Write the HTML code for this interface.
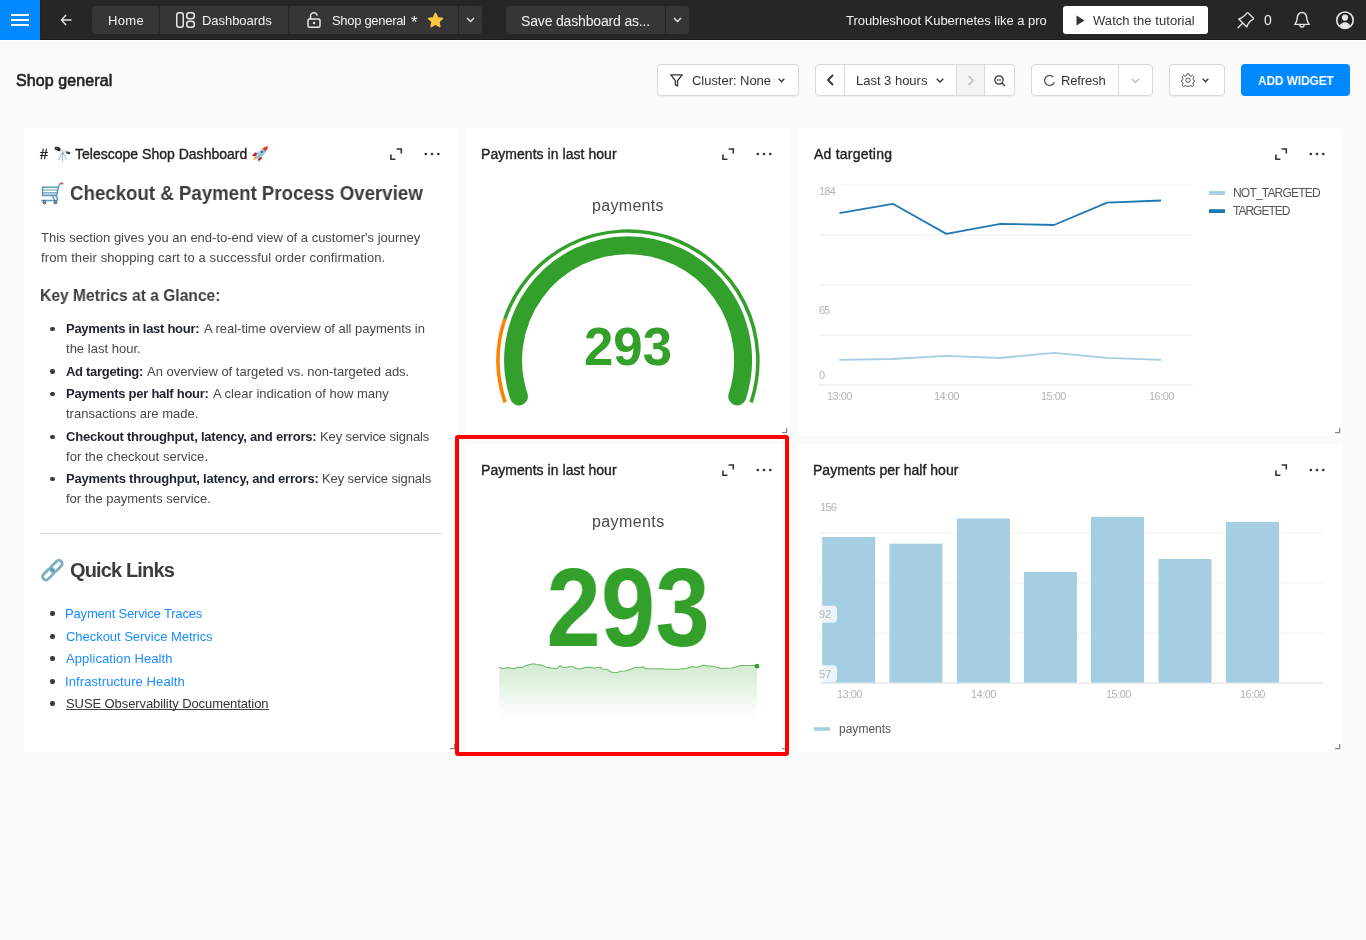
<!DOCTYPE html>
<html><head><meta charset="utf-8">
<style>
*{box-sizing:border-box;margin:0;padding:0}
html,body{width:1366px;height:940px;overflow:hidden;background:#fafafa;font-family:"Liberation Sans",sans-serif;position:relative}
.t{position:absolute;white-space:pre;line-height:0;will-change:transform}
.abs{position:absolute}
.topbar{position:absolute;left:0;top:0;width:1366px;height:40px;background:#262626}
.ham{position:absolute;left:0;top:0;width:40px;height:40px;background:#0088ff}
.ham i{position:absolute;left:11px;width:18px;height:2px;background:#fff}
.nb{position:absolute;top:6px;height:28px;background:#363636}
.btn{position:absolute;top:64px;height:32px;background:#fff;border:1px solid #d9d9d9;border-radius:4px;box-shadow:0 1px 1px rgba(0,0,0,0.04)}
.panel{position:absolute;background:#fff;border-radius:4px}
.grid{position:absolute;height:1px;background:#f0f0f0}
svg{position:absolute;overflow:visible}
</style></head><body>
<div class="topbar"></div>
<div class="abs" style="left:40px;top:39px;width:1326px;height:1px;background:#1b1b1b"></div>
<div class="abs" style="left:40px;top:0;width:1px;height:40px;background:#2b2119"></div>
<div class="abs" style="left:0;top:40px;width:1366px;height:1px;background:#fff"></div>
<div class="ham"><i style="top:13.8px"></i><i style="top:19px"></i><i style="top:24.2px"></i></div>
<!-- back arrow -->
<svg style="left:60px;top:14px" width="12" height="12" viewBox="0 0 12 12"><path d="M6 1 L1.5 6 L6 11 M1.5 6 H11.5" fill="none" stroke="#e6e6e6" stroke-width="1.4"/></svg>
<!-- breadcrumbs -->
<div class="nb" style="left:92px;width:67px;border-radius:4px 0 0 4px"></div>
<div class="nb" style="left:160px;width:128px"></div>
<div class="nb" style="left:289px;width:169px"></div>
<div class="nb" style="left:459px;width:23px;border-radius:0 4px 4px 0"></div>
<!-- dashboards icon -->
<svg style="left:176px;top:12px" width="19" height="16" viewBox="0 0 19 16"><rect x="0.75" y="0.75" width="6.5" height="14.5" rx="2.5" fill="none" stroke="#e6e6e6" stroke-width="1.5"/><rect x="10.75" y="0.75" width="7.5" height="6" rx="2.5" fill="none" stroke="#e6e6e6" stroke-width="1.5"/><rect x="10.75" y="9.25" width="7.5" height="6" rx="2.5" fill="none" stroke="#e6e6e6" stroke-width="1.5"/></svg>
<!-- lock icon -->
<svg style="left:307px;top:12px" width="14" height="16" viewBox="0 0 14 16"><rect x="1" y="7" width="12" height="8.2" rx="1.5" fill="none" stroke="#e6e6e6" stroke-width="1.5"/><path d="M3.5 7 V4.5 A3.3 3.3 0 0 1 10.2 3.6" fill="none" stroke="#e6e6e6" stroke-width="1.5"/><circle cx="7" cy="11" r="1.2" fill="#e6e6e6"/></svg>
<!-- star -->
<svg style="left:427px;top:12px" width="17" height="16" viewBox="0 0 24 23"><path d="M12 2 L15 8.4 L22 9.2 L16.8 13.9 L18.3 20.8 L12 17.2 L5.7 20.8 L7.2 13.9 L2 9.2 L9 8.4 Z" fill="#fbc53d" stroke="#fbc53d" stroke-width="2.2" stroke-linejoin="round"/></svg>
<svg style="left:466px;top:17px" width="9" height="6" viewBox="0 0 9 6"><path d="M1 1 L4.5 4.5 L8 1" fill="none" stroke="#e6e6e6" stroke-width="1.4"/></svg>
<!-- save dashboard -->
<div class="nb" style="left:506px;width:159px;border-radius:4px 0 0 4px"></div>
<div class="nb" style="left:666px;width:23px;border-radius:0 4px 4px 0"></div>
<svg style="left:673px;top:17px" width="9" height="6" viewBox="0 0 9 6"><path d="M1 1 L4.5 4.5 L8 1" fill="none" stroke="#e6e6e6" stroke-width="1.4"/></svg>
<!-- watch tutorial -->
<div class="abs" style="left:1063px;top:6px;width:145px;height:28px;background:#fff;border-radius:3px"></div>
<svg style="left:1076px;top:15px" width="9" height="11" viewBox="0 0 9 11"><path d="M0.5 0.5 L8.5 5.5 L0.5 10.5 Z" fill="#333"/></svg>
<!-- pin -->
<svg style="left:0;top:0" width="1366" height="40" viewBox="0 0 1366 40">
<path d="M1247 12.9 Q1247.6 12.4 1248.2 12.9 L1253.3 18 Q1253.8 18.6 1253.2 19.2 L1250.4 21 L1247.8 24.4 L1246.8 26.9 L1238.8 19 L1241.4 18 L1244.9 15.2 Z M1242.3 23.6 L1238.1 27.8" fill="none" stroke="#e6e6e6" stroke-width="1.35" stroke-linejoin="round" stroke-linecap="round"/>
<path d="M1302 12.5 C1298.4 12.5 1297.3 15.8 1297.1 19 C1296.9 22 1295.6 23.4 1294.8 24.4 H1309.2 C1308.4 23.4 1307.1 22 1306.9 19 C1306.7 15.8 1305.6 12.5 1302 12.5 Z" fill="none" stroke="#e6e6e6" stroke-width="1.35" stroke-linejoin="round"/>
<path d="M1299.9 24.9 A2.1 2.1 0 0 0 1304.1 24.9" fill="none" stroke="#e6e6e6" stroke-width="1.35"/>
<circle cx="1345" cy="20.2" r="8.2" fill="none" stroke="#e6e6e6" stroke-width="1.6"/>
<circle cx="1345" cy="17.6" r="3.1" fill="#e6e6e6"/>
<path d="M1339.3 26.2 C1340.6 23.4 1342.8 22.2 1345 22.2 C1347.2 22.2 1349.4 23.4 1350.7 26.2 A7.6 7.6 0 0 1 1339.3 26.2 Z" fill="#e6e6e6"/>
</svg>

<!-- toolbar -->
<div class="btn" style="left:657px;width:142px"></div>
<svg style="left:670px;top:74px" width="13" height="13" viewBox="0 0 13 13"><path d="M0.8 0.8 H12.2 L7.6 6.6 V12 L5.4 11 V6.6 Z" fill="none" stroke="#333" stroke-width="1.3" stroke-linejoin="round"/></svg>
<svg style="left:778px;top:78px" width="7" height="5" viewBox="0 0 7 5"><path d="M0.7 0.7 L3.5 3.8 L6.3 0.7" fill="none" stroke="#333" stroke-width="1.3"/></svg>

<div class="btn" style="left:815px;width:200px"></div>
<div class="abs" style="left:844px;top:65px;width:1px;height:30px;background:#d9d9d9"></div>
<div class="abs" style="left:956px;top:65px;width:29px;height:30px;background:#f3f3f3;border-left:1px solid #d9d9d9;border-right:1px solid #d9d9d9"></div>
<svg style="left:826px;top:74px" width="9" height="12" viewBox="0 0 9 12"><path d="M7 1 L2 6 L7 11" fill="none" stroke="#333" stroke-width="1.8"/></svg>
<svg style="left:936px;top:78px" width="8" height="5" viewBox="0 0 8 5"><path d="M0.7 0.7 L4 4 L7.3 0.7" fill="none" stroke="#333" stroke-width="1.3"/></svg>
<svg style="left:967px;top:75px" width="8" height="11" viewBox="0 0 8 11"><path d="M1.5 1 L6 5.5 L1.5 10" fill="none" stroke="#bbb" stroke-width="1.5"/></svg>
<svg style="left:994px;top:75px" width="12" height="11" viewBox="0 0 12 11"><circle cx="5" cy="5" r="4.2" fill="none" stroke="#333" stroke-width="1.2"/><path d="M3 5 H7 M8 8 L11 11" fill="none" stroke="#333" stroke-width="1.2"/></svg>

<div class="btn" style="left:1031px;width:122px"></div>
<div class="abs" style="left:1118px;top:65px;width:1px;height:30px;background:#d9d9d9"></div>
<svg style="left:1043px;top:74px" width="13" height="13" viewBox="0 0 13 13"><path d="M10.4 3.2 A5 5 0 1 0 11.3 8.2" fill="none" stroke="#555" stroke-width="1.3"/></svg>
<svg style="left:1131px;top:78px" width="9" height="5" viewBox="0 0 9 5"><path d="M0.7 0.7 L4.5 4.3 L8.3 0.7" fill="none" stroke="#bbb" stroke-width="1.2"/></svg>

<div class="btn" style="left:1169px;width:56px"></div>
<svg style="left:1181px;top:73px" width="14" height="14" viewBox="0 0 14 14"><path d="M6 0.8 H8 L8.4 2.6 L9.9 3.3 L11.5 2.3 L12.9 3.7 L11.9 5.3 L12.5 6.8 L13.2 7 V8.9 L12.4 9.3 L11.8 10.7 L12.8 12.3 L11.4 13.6 L9.8 12.6 L8.3 13.2 L8 13.2 H6 L5.6 13.2 L4.1 12.6 L2.5 13.6 L1.1 12.3 L2.1 10.7 L1.5 9.3 L0.8 8.9 V7 L1.5 6.8 L2.1 5.3 L1.1 3.7 L2.5 2.3 L4.1 3.3 L5.6 2.6 Z" fill="none" stroke="#444" stroke-width="0.95" stroke-linejoin="round"/><circle cx="7" cy="7.2" r="2.2" fill="none" stroke="#444" stroke-width="0.95"/></svg>
<svg style="left:1202px;top:78px" width="7" height="5" viewBox="0 0 7 5"><path d="M0.7 0.7 L3.5 3.8 L6.3 0.7" fill="none" stroke="#333" stroke-width="1.3"/></svg>

<div class="abs" style="left:1241px;top:64px;width:109px;height:32px;background:#0088ff;border-radius:4px"></div>

<!-- panels -->
<div class="panel" style="left:24px;top:128px;width:434px;height:624px"></div>
<div class="panel" style="left:466px;top:128px;width:324px;height:308px"></div>
<div class="panel" style="left:466px;top:444px;width:324px;height:308px"></div>
<div class="panel" style="left:798px;top:128px;width:545px;height:308px"></div>
<div class="panel" style="left:798px;top:444px;width:545px;height:308px"></div>

<svg style="left:389px;top:147px" width="14" height="14" viewBox="0 0 14 14"><path d="M1.95 7.6 V12.3 H6.4 M7.6 1.95 H12.3 V6.4" fill="none" stroke="#333" stroke-width="1.6"/></svg>
<svg style="left:423px;top:151px" width="18" height="6" viewBox="0 0 18 6"><circle cx="2.8" cy="3" r="1.35" fill="#333"/><circle cx="9" cy="3" r="1.35" fill="#333"/><circle cx="15.3" cy="3" r="1.35" fill="#333"/></svg>
<svg style="left:449px;top:743px" width="7" height="7" viewBox="0 0 7 7"><path d="M1 5.6 H5.6 V1" fill="none" stroke="#888" stroke-width="1.3"/></svg>
<svg style="left:721px;top:147px" width="14" height="14" viewBox="0 0 14 14"><path d="M1.95 7.6 V12.3 H6.4 M7.6 1.95 H12.3 V6.4" fill="none" stroke="#333" stroke-width="1.6"/></svg>
<svg style="left:755px;top:151px" width="18" height="6" viewBox="0 0 18 6"><circle cx="2.8" cy="3" r="1.35" fill="#333"/><circle cx="9" cy="3" r="1.35" fill="#333"/><circle cx="15.3" cy="3" r="1.35" fill="#333"/></svg>
<svg style="left:781px;top:427px" width="7" height="7" viewBox="0 0 7 7"><path d="M1 5.6 H5.6 V1" fill="none" stroke="#888" stroke-width="1.3"/></svg>
<svg style="left:721px;top:463px" width="14" height="14" viewBox="0 0 14 14"><path d="M1.95 7.6 V12.3 H6.4 M7.6 1.95 H12.3 V6.4" fill="none" stroke="#333" stroke-width="1.6"/></svg>
<svg style="left:755px;top:467px" width="18" height="6" viewBox="0 0 18 6"><circle cx="2.8" cy="3" r="1.35" fill="#333"/><circle cx="9" cy="3" r="1.35" fill="#333"/><circle cx="15.3" cy="3" r="1.35" fill="#333"/></svg>
<svg style="left:781px;top:743px" width="7" height="7" viewBox="0 0 7 7"><path d="M1 5.6 H5.6 V1" fill="none" stroke="#888" stroke-width="1.3"/></svg>
<svg style="left:1274px;top:147px" width="14" height="14" viewBox="0 0 14 14"><path d="M1.95 7.6 V12.3 H6.4 M7.6 1.95 H12.3 V6.4" fill="none" stroke="#333" stroke-width="1.6"/></svg>
<svg style="left:1308px;top:151px" width="18" height="6" viewBox="0 0 18 6"><circle cx="2.8" cy="3" r="1.35" fill="#333"/><circle cx="9" cy="3" r="1.35" fill="#333"/><circle cx="15.3" cy="3" r="1.35" fill="#333"/></svg>
<svg style="left:1334px;top:427px" width="7" height="7" viewBox="0 0 7 7"><path d="M1 5.6 H5.6 V1" fill="none" stroke="#888" stroke-width="1.3"/></svg>
<svg style="left:1274px;top:463px" width="14" height="14" viewBox="0 0 14 14"><path d="M1.95 7.6 V12.3 H6.4 M7.6 1.95 H12.3 V6.4" fill="none" stroke="#333" stroke-width="1.6"/></svg>
<svg style="left:1308px;top:467px" width="18" height="6" viewBox="0 0 18 6"><circle cx="2.8" cy="3" r="1.35" fill="#333"/><circle cx="9" cy="3" r="1.35" fill="#333"/><circle cx="15.3" cy="3" r="1.35" fill="#333"/></svg>
<svg style="left:1334px;top:743px" width="7" height="7" viewBox="0 0 7 7"><path d="M1 5.6 H5.6 V1" fill="none" stroke="#888" stroke-width="1.3"/></svg>
<svg style="left:50px;top:143px" width="24" height="20" viewBox="0 0 24 20">
<path d="M12.6 9 L8.8 16.8 M12.6 9 L12.6 18.4 M12.8 9 L16.4 16.4" stroke="#8cc3d8" stroke-width="0.95" fill="none" stroke-linecap="round"/>
<path d="M12.2 9.8 L13.6 10.2" stroke="#4a8ca4" stroke-width="1.6"/>
<path d="M9.6 7.2 L17 9.4" stroke="#e2e2e2" stroke-width="2.8" stroke-linecap="round"/>
<path d="M6.4 5.4 L8.8 6.3" stroke="#222" stroke-width="3.6" stroke-linecap="round"/>
<path d="M17.2 9.5 L19.2 10.1" stroke="#3a3a3a" stroke-width="2.2" stroke-linecap="round"/>
<circle cx="6.3" cy="5.3" r="0.7" fill="#5ab0e0"/>
</svg>
<svg style="left:246px;top:143px" width="26" height="20" viewBox="0 0 26 20">
<path d="M6.4 17.6 L8.6 13 L11.4 15.6 Z" fill="#f7d440"/>
<path d="M8.4 16 L10.2 13.6 L10.8 14.4 Z" fill="#e03a22"/>
<path d="M6 12.6 L9.6 9.2 L11.6 10.6 L9 13.4 Z" fill="#c9151e"/>
<path d="M12.6 18.6 L16.2 15 L14.8 13 L12 15.8 Z" fill="#c9151e"/>
<ellipse cx="0" cy="0" rx="7.4" ry="2.9" transform="translate(15.2 10.2) rotate(-45)" fill="#9fcbe0"/>
<path d="M17.6 4.8 C19.2 3.6 20.8 3.3 21.9 3.2 C21.8 4.4 21.4 6 20.2 7.6 L19.4 8.4 L16.6 5.6 Z" fill="#e23b22"/>
<circle cx="16" cy="9" r="1.1" fill="#3e4552"/>
<path d="M11.6 14.4 L19.6 6.6" stroke="#5e9fb6" stroke-width="0.9" opacity="0.6"/>
</svg>
<svg style="left:38px;top:180px" width="28" height="26" viewBox="0 0 28 26">
<path d="M4.6 7.2 H20.4 L18.6 15.4 H4.6 Z" fill="none" stroke="#5d9db8" stroke-width="1.6" stroke-linejoin="round"/>
<path d="M4.6 10 H19.8 M4.6 12.8 H19.2" stroke="#5d9db8" stroke-width="1.2"/>
<path d="M20.4 7.2 L22 3.6 L23.6 3.2 M17.6 15.4 L19.6 18.4 L19.2 20 M14.6 16 L16.4 19.8 M3.8 20.6 H19.4" fill="none" stroke="#5d9db8" stroke-width="1.5" stroke-linecap="round"/>
<circle cx="24.2" cy="3.4" r="1.2" fill="#e0644a"/>
<circle cx="6.4" cy="22.4" r="1.5" fill="#5d9db8" stroke="#444" stroke-width="0.7"/>
<circle cx="17.4" cy="22.4" r="1.5" fill="#5d9db8" stroke="#444" stroke-width="0.7"/>
</svg>
<svg style="left:38px;top:556px" width="28" height="28" viewBox="0 0 28 28">
<rect x="-3.3" y="-6.8" width="6.6" height="13.6" rx="3.3" transform="translate(10.4 18.2) rotate(45)" fill="none" stroke="#7fb0c2" stroke-width="2.9"/>
<rect x="-3.3" y="-6.8" width="6.6" height="13.6" rx="3.3" transform="translate(18.4 10.2) rotate(45)" fill="none" stroke="#7fb0c2" stroke-width="2.9"/>
<path d="M13.2 12 L13.6 15.4 M15 13 L15.4 16.2" stroke="#4f8fa6" stroke-width="0.9"/>
</svg>
<div class="abs" style="left:50.2px;top:326.8px;width:4.4px;height:4.4px;border-radius:50%;background:#3a3a3a"></div>
<div class="abs" style="left:50.2px;top:369.2px;width:4.4px;height:4.4px;border-radius:50%;background:#3a3a3a"></div>
<div class="abs" style="left:50.2px;top:391.5px;width:4.4px;height:4.4px;border-radius:50%;background:#3a3a3a"></div>
<div class="abs" style="left:50.2px;top:434.7px;width:4.4px;height:4.4px;border-radius:50%;background:#3a3a3a"></div>
<div class="abs" style="left:50.2px;top:476.6px;width:4.4px;height:4.4px;border-radius:50%;background:#3a3a3a"></div>
<div class="abs" style="left:50.2px;top:611.2px;width:4.4px;height:4.4px;border-radius:50%;background:#3a3a3a"></div>
<div class="abs" style="left:50.2px;top:634.4px;width:4.4px;height:4.4px;border-radius:50%;background:#3a3a3a"></div>
<div class="abs" style="left:50.2px;top:656.3px;width:4.4px;height:4.4px;border-radius:50%;background:#3a3a3a"></div>
<div class="abs" style="left:50.2px;top:679.4px;width:4.4px;height:4.4px;border-radius:50%;background:#3a3a3a"></div>
<div class="abs" style="left:50.2px;top:701.2px;width:4.4px;height:4.4px;border-radius:50%;background:#3a3a3a"></div>
<div class="abs" style="left:66px;top:709px;width:203px;height:1px;background:#444"></div>

<!-- markdown extras -->
<div class="abs" style="left:40px;top:533px;width:402px;height:1px;background:#ddd"></div>

<svg style="left:0;top:0" width="1366" height="940" viewBox="0 0 1366 940">
<path d="M518.92 396.41 A115 115 0 1 1 737.28 396.41" fill="none" stroke="#33a02c" stroke-width="18" stroke-linecap="round"/>
<path d="M504.67 319.48 A130 130 0 1 1 751.09 402.41" fill="none" stroke="#33a02c" stroke-width="3.5"/>
<path d="M505.11 402.41 A130 130 0 0 1 504.67 319.48" fill="none" stroke="#ff7f00" stroke-width="3.5"/>
<defs><linearGradient id="sg" x1="0" y1="0" x2="0" y2="1"><stop offset="0" stop-color="#33a02c" stop-opacity="0.22"/><stop offset="0.85" stop-color="#33a02c" stop-opacity="0.03"/><stop offset="1" stop-color="#33a02c" stop-opacity="0"/></linearGradient></defs>
<polygon points="499.2,667.4 503.3,668.4 508.4,667.4 513.6,668.7 517.7,667.2 521.8,667.6 525.9,665.4 533.0,663.8 543.3,665.6 546.4,667.2 556.6,668.7 560.2,665.6 563.3,667.6 572.0,666.4 576.6,668.7 580.2,668.7 586.3,667.2 592.5,667.4 593.5,668.2 600.2,667.2 602.7,669.0 606.8,669.3 610.9,672.0 617.1,672.8 620.2,671.3 625.0,671.0 630.1,669.5 634.7,667.4 643.4,666.9 646.0,668.7 658.8,668.7 676.2,669.5 686.5,668.2 692.6,666.4 696.7,667.4 703.9,664.9 707.0,665.9 712.1,665.9 721.3,668.4 731.6,667.9 740.8,665.6 753.1,665.4 757.0,665.6 757,719 499.2,719" fill="url(#sg)"/>
<polyline points="499.2,667.4 503.3,668.4 508.4,667.4 513.6,668.7 517.7,667.2 521.8,667.6 525.9,665.4 533.0,663.8 543.3,665.6 546.4,667.2 556.6,668.7 560.2,665.6 563.3,667.6 572.0,666.4 576.6,668.7 580.2,668.7 586.3,667.2 592.5,667.4 593.5,668.2 600.2,667.2 602.7,669.0 606.8,669.3 610.9,672.0 617.1,672.8 620.2,671.3 625.0,671.0 630.1,669.5 634.7,667.4 643.4,666.9 646.0,668.7 658.8,668.7 676.2,669.5 686.5,668.2 692.6,666.4 696.7,667.4 703.9,664.9 707.0,665.9 712.1,665.9 721.3,668.4 731.6,667.9 740.8,665.6 753.1,665.4 757.0,665.6" fill="none" stroke="#33a02c" stroke-opacity="0.7" stroke-width="1.05" stroke-linejoin="round"/>
<circle cx="757" cy="666.2" r="2.4" fill="#33a02c"/>
<rect x="818.8" y="184.5" width="374" height="1.2" fill="#f2f2f2"/>
<rect x="818.8" y="234.2" width="374" height="1.2" fill="#f2f2f2"/>
<rect x="818.8" y="284.4" width="374" height="1.2" fill="#f2f2f2"/>
<rect x="818.8" y="334.5" width="374" height="1.2" fill="#f2f2f2"/>
<rect x="818.8" y="384.3" width="374" height="1.2" fill="#ececec"/>
<rect x="818" y="183" width="23" height="4" fill="#fff"/>
<polyline points="839.3,359.9 892.2,359 946.2,355.8 999.6,358 1054,352.8 1107.1,357.8 1161.1,359.9" fill="none" stroke="#a6cee3" stroke-width="1.8" stroke-linejoin="round"/>
<polyline points="839.4,213.1 892.8,203.8 946.3,233.9 1000.5,223.8 1054,225 1107.1,202.6 1161.1,200.5" fill="none" stroke="#1f78b4" stroke-width="1.8" stroke-linejoin="round"/>
<rect x="1209" y="191.1" width="16" height="3.8" fill="#a6cee3"/>
<rect x="1209" y="209.2" width="16" height="3.8" fill="#1f78b4"/>
<rect x="818.8" y="532.5" width="504" height="1.2" fill="#f2f2f2"/>
<rect x="818.8" y="582.3" width="504" height="1.2" fill="#f2f2f2"/>
<rect x="818.8" y="632.5" width="504" height="1.2" fill="#f2f2f2"/>
<rect x="818.8" y="682.5" width="504" height="1.3" fill="#e6e6e6"/>
<rect x="822.2" y="537" width="53" height="145.6" fill="#a6cee3"/>
<rect x="889.4" y="543.7" width="53" height="138.9" fill="#a6cee3"/>
<rect x="956.9" y="518.5" width="53" height="164.1" fill="#a6cee3"/>
<rect x="1023.9" y="572" width="53" height="110.6" fill="#a6cee3"/>
<rect x="1091" y="516.9" width="53" height="165.7" fill="#a6cee3"/>
<rect x="1158.5" y="559" width="53" height="123.6" fill="#a6cee3"/>
<rect x="1226" y="521.9" width="53" height="160.7" fill="#a6cee3"/>
<rect x="814" y="605.8" width="23" height="17" rx="4" fill="#fff" fill-opacity="0.8"/>
<rect x="814" y="665.2" width="23" height="17" rx="4" fill="#fff" fill-opacity="0.8"/>
<rect x="814" y="727.2" width="16" height="3.6" fill="#a6cee3"/>
</svg>

<div class="t " style="left:107.60px;top:21.40px;font-size:13.00px;font-weight:400;color:#f2f2f2;letter-spacing:0.318px;">Home</div>
<div class="t " style="left:201.80px;top:21.30px;font-size:13.00px;font-weight:400;color:#f2f2f2;letter-spacing:-0.044px;">Dashboards</div>
<div class="t " style="left:331.50px;top:21.30px;font-size:13.00px;font-weight:400;color:#f2f2f2;letter-spacing:-0.305px;">Shop general</div>
<div class="t " style="left:411.20px;top:23.01px;font-size:17.00px;font-weight:400;color:#f2f2f2;">*</div>
<div class="t " style="left:521.00px;top:20.75px;font-size:14.00px;font-weight:400;color:#f2f2f2;letter-spacing:-0.164px;">Save dashboard as...</div>
<div class="t " style="left:845.50px;top:21.10px;font-size:13.00px;font-weight:400;color:#f2f2f2;letter-spacing:-0.034px;">Troubleshoot Kubernetes like a pro</div>
<div class="t " style="left:1093.00px;top:21.40px;font-size:13.00px;font-weight:400;color:#333;letter-spacing:0.060px;">Watch the tutorial</div>
<div class="t " style="left:1263.70px;top:20.45px;font-size:14.00px;font-weight:400;color:#f2f2f2;">0</div>
<div class="t " style="left:16.00px;top:80.76px;font-size:16.00px;font-weight:400;color:#222;letter-spacing:0.097px;-webkit-text-stroke:0.6px #222;">Shop general</div>
<div class="t " style="left:691.70px;top:81.10px;font-size:13.00px;font-weight:400;color:#333;letter-spacing:-0.037px;">Cluster: None</div>
<div class="t " style="left:856.10px;top:81.10px;font-size:13.00px;font-weight:400;color:#333;letter-spacing:-0.013px;">Last 3 hours</div>
<div class="t " style="left:1061.40px;top:81.30px;font-size:13.00px;font-weight:400;color:#333;letter-spacing:-0.148px;">Refresh</div>
<div class="t " style="left:1257.80px;top:81.40px;font-size:13.00px;font-weight:700;color:#fff;transform:scaleX(0.9042);transform-origin:0.00px 0;">ADD WIDGET</div>
<div class="t " style="left:40.00px;top:153.95px;font-size:14.00px;font-weight:400;color:#222;-webkit-text-stroke:0.35px #222;">#</div>
<div class="t " style="left:75.40px;top:153.95px;font-size:14.00px;font-weight:400;color:#222;letter-spacing:0.012px;-webkit-text-stroke:0.35px #222;">Telescope Shop Dashboard</div>
<div class="t " style="left:69.90px;top:192.67px;font-size:20.00px;font-weight:700;color:#3d3d3d;transform:scaleX(0.9332);transform-origin:0.00px 0;">Checkout &amp; Payment Process Overview</div>
<div class="t " style="left:40.50px;top:237.80px;font-size:13.00px;font-weight:400;color:#474747;letter-spacing:-0.007px;">This section gives you an end-to-end view of a customer's journey</div>
<div class="t " style="left:40.50px;top:257.60px;font-size:13.00px;font-weight:400;color:#474747;letter-spacing:0.103px;">from their shopping cart to a successful order confirmation.</div>
<div class="t " style="left:39.50px;top:294.78px;font-size:16.50px;font-weight:700;color:#3d3d3d;transform:scaleX(0.9455);transform-origin:1.00px 0;">Key Metrics at a Glance:</div>
<div class="t " style="left:66.40px;top:329.40px;font-size:13.00px;font-weight:700;color:#1e2330;letter-spacing:-0.281px;">Payments in last hour:</div>
<div class="t " style="left:203.59px;top:329.40px;font-size:13.00px;font-weight:400;color:#474747;letter-spacing:-0.023px;">A real-time overview of all payments in</div>
<div class="t " style="left:66.40px;top:349.20px;font-size:13.00px;font-weight:400;color:#474747;letter-spacing:0.016px;">the last hour.</div>
<div class="t " style="left:66.40px;top:371.80px;font-size:13.00px;font-weight:700;color:#1e2330;letter-spacing:-0.299px;">Ad targeting:</div>
<div class="t " style="left:147.37px;top:371.80px;font-size:13.00px;font-weight:400;color:#474747;letter-spacing:-0.002px;">An overview of targeted vs. non-targeted ads.</div>
<div class="t " style="left:66.40px;top:394.10px;font-size:13.00px;font-weight:700;color:#1e2330;letter-spacing:-0.269px;">Payments per half hour:</div>
<div class="t " style="left:212.96px;top:394.10px;font-size:13.00px;font-weight:400;color:#474747;letter-spacing:0.008px;">A clear indication of how many</div>
<div class="t " style="left:66.40px;top:413.70px;font-size:13.00px;font-weight:400;color:#474747;letter-spacing:0.005px;">transactions are made.</div>
<div class="t " style="left:66.40px;top:437.30px;font-size:13.00px;font-weight:700;color:#1e2330;letter-spacing:-0.211px;">Checkout throughput, latency, and errors:</div>
<div class="t " style="left:319.70px;top:437.30px;font-size:13.00px;font-weight:400;color:#474747;letter-spacing:-0.109px;">Key service signals</div>
<div class="t " style="left:66.40px;top:457.20px;font-size:13.00px;font-weight:400;color:#474747;letter-spacing:0.046px;">for the checkout service.</div>
<div class="t " style="left:66.40px;top:479.20px;font-size:13.00px;font-weight:700;color:#1e2330;letter-spacing:-0.213px;">Payments throughput, latency, and errors:</div>
<div class="t " style="left:321.80px;top:479.20px;font-size:13.00px;font-weight:400;color:#474747;letter-spacing:-0.115px;">Key service signals</div>
<div class="t " style="left:66.40px;top:499.10px;font-size:13.00px;font-weight:400;color:#474747;letter-spacing:-0.012px;">for the payments service.</div>
<div class="t " style="left:69.70px;top:570.17px;font-size:20.00px;font-weight:700;color:#3d3d3d;letter-spacing:-0.855px;">Quick Links</div>
<div class="t " style="left:65.40px;top:613.80px;font-size:13.00px;font-weight:400;color:#1a8cff;letter-spacing:-0.172px;">Payment Service Traces</div>
<div class="t " style="left:66.40px;top:637.00px;font-size:13.00px;font-weight:400;color:#1a8cff;letter-spacing:-0.034px;">Checkout Service Metrics</div>
<div class="t " style="left:66.40px;top:658.90px;font-size:13.00px;font-weight:400;color:#1a8cff;letter-spacing:0.103px;">Application Health</div>
<div class="t " style="left:65.40px;top:682.00px;font-size:13.00px;font-weight:400;color:#1a8cff;letter-spacing:0.093px;">Infrastructure Health</div>
<div class="t " style="left:66.40px;top:703.80px;font-size:13.00px;font-weight:400;color:#333;letter-spacing:-0.086px;">SUSE Observability Documentation</div>
<div class="t " style="left:481.20px;top:154.15px;font-size:14.00px;font-weight:400;color:#222;letter-spacing:0.047px;-webkit-text-stroke:0.35px #222;">Payments in last hour</div>
<div class="t " style="left:591.80px;top:206.06px;font-size:16.00px;font-weight:400;color:#4a4a4a;letter-spacing:0.319px;">payments</div>
<div class="t " style="left:583.90px;top:346.91px;font-size:52.80px;font-weight:700;color:#33a02c;">293</div>
<div class="t " style="left:481.20px;top:470.15px;font-size:14.00px;font-weight:400;color:#222;letter-spacing:0.047px;-webkit-text-stroke:0.35px #222;">Payments in last hour</div>
<div class="t " style="left:591.50px;top:521.76px;font-size:16.00px;font-weight:400;color:#4a4a4a;letter-spacing:0.405px;">payments</div>
<div class="t " style="left:546.20px;top:608.04px;font-size:111.00px;font-weight:700;color:#33a02c;transform:scaleX(0.8820);transform-origin:3.00px 0;">293</div>
<div class="t " style="left:814.00px;top:154.15px;font-size:14.00px;font-weight:400;color:#222;letter-spacing:0.226px;-webkit-text-stroke:0.35px #222;">Ad targeting</div>
<div class="t " style="left:813.00px;top:470.15px;font-size:14.00px;font-weight:400;color:#222;letter-spacing:0.029px;-webkit-text-stroke:0.35px #222;">Payments per half hour</div>
<div class="t " style="left:819.30px;top:191.19px;font-size:11.00px;font-weight:400;color:#b3b3b3;letter-spacing:-0.768px;">184</div>
<div class="t " style="left:819.10px;top:310.19px;font-size:11.00px;font-weight:400;color:#b3b3b3;letter-spacing:-1.218px;">65</div>
<div class="t " style="left:819.10px;top:374.89px;font-size:11.00px;font-weight:400;color:#b3b3b3;">0</div>
<div class="t " style="left:826.80px;top:395.79px;font-size:11.00px;font-weight:400;color:#b3b3b3;letter-spacing:-0.552px;">13:00</div>
<div class="t " style="left:933.90px;top:395.79px;font-size:11.00px;font-weight:400;color:#b3b3b3;letter-spacing:-0.552px;">14:00</div>
<div class="t " style="left:1041.40px;top:395.79px;font-size:11.00px;font-weight:400;color:#b3b3b3;letter-spacing:-0.552px;">15:00</div>
<div class="t " style="left:1148.50px;top:395.79px;font-size:11.00px;font-weight:400;color:#b3b3b3;letter-spacing:-0.552px;">16:00</div>
<div class="t " style="left:1233.30px;top:193.24px;font-size:12.00px;font-weight:400;color:#555;letter-spacing:-0.808px;">NOT_TARGETED</div>
<div class="t " style="left:1233.30px;top:210.84px;font-size:12.00px;font-weight:400;color:#555;letter-spacing:-1.012px;">TARGETED</div>
<div class="t " style="left:819.50px;top:507.19px;font-size:11.00px;font-weight:400;color:#b3b3b3;letter-spacing:-0.718px;">156</div>
<div class="t " style="left:818.80px;top:614.19px;font-size:11.00px;font-weight:400;color:#b3b3b3;letter-spacing:0.082px;">92</div>
<div class="t " style="left:818.80px;top:673.59px;font-size:11.00px;font-weight:400;color:#b3b3b3;letter-spacing:0.082px;">57</div>
<div class="t " style="left:836.50px;top:693.89px;font-size:11.00px;font-weight:400;color:#b3b3b3;letter-spacing:-0.552px;">13:00</div>
<div class="t " style="left:971.10px;top:693.89px;font-size:11.00px;font-weight:400;color:#b3b3b3;letter-spacing:-0.552px;">14:00</div>
<div class="t " style="left:1105.70px;top:693.89px;font-size:11.00px;font-weight:400;color:#b3b3b3;letter-spacing:-0.552px;">15:00</div>
<div class="t " style="left:1240.20px;top:693.89px;font-size:11.00px;font-weight:400;color:#b3b3b3;letter-spacing:-0.552px;">16:00</div>
<div class="t " style="left:838.60px;top:729.24px;font-size:12.00px;font-weight:400;color:#555;letter-spacing:0.011px;">payments</div>

<!-- red highlight -->
<div class="abs" style="left:455px;top:435px;width:334px;height:321px;border:4px solid #ff0000;border-radius:3px"></div>
</body></html>
